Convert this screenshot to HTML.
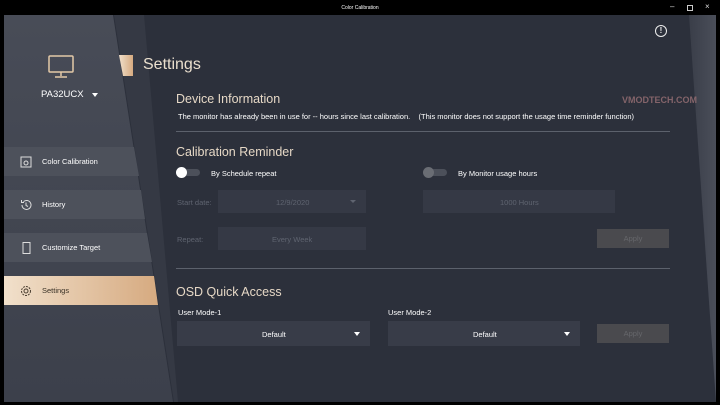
<!DOCTYPE html>
<html><head><style>
*{margin:0;padding:0;box-sizing:border-box}
body{width:720px;height:405px;background:#000;font-family:"Liberation Sans",sans-serif;position:relative;overflow:hidden}
.abs{position:absolute}
#win{position:absolute;left:4px;top:15px;width:712px;height:387px;background:#2c303b;overflow:hidden}
.t{position:absolute;white-space:nowrap}
.h{color:#e6d8c6;font-size:12.5px}
.s{color:#fff;font-size:7.5px}
.box{position:absolute;background:#353945}
.dim{color:#5f6470;font-size:7.5px}
.btn{position:absolute;background:#4a4a4e;color:#66676b;font-size:7.5px;text-align:center}
.item{position:absolute;left:0;width:150px;height:29px;color:#fff;font-size:7.5px}
.item span{position:absolute;left:38px;top:10px;white-space:nowrap}
.item svg{position:absolute;left:16px;top:9px}
</style></head><body>
<div class="t" style="left:0;width:720px;top:5px;text-align:center;color:#fff;font-size:5px">Color Calibration</div>
<div class="t" style="left:670px;top:2px;color:#ddd;font-size:8px">–</div>
<div class="abs" style="left:687px;top:5px;width:6px;height:6px;border:1px solid #ccc"></div>
<div class="t" style="left:705px;top:2px;color:#ddd;font-size:8px">×</div>
<div id="win">
 <svg class="abs" style="left:0;top:0" width="712" height="387">
  <defs><linearGradient id="sb" x1="0" y1="0" x2="0" y2="1"><stop offset="0" stop-color="#484c57"/><stop offset="1" stop-color="#3c404b"/></linearGradient>
  <linearGradient id="gd" x1="0" y1="0" x2="1" y2="0"><stop offset="0" stop-color="#f1e0cb"/><stop offset="1" stop-color="#d6aa80"/></linearGradient>
  <linearGradient id="rs" x1="0" y1="0" x2="1" y2="0"><stop offset="0" stop-color="#3a3e49"/><stop offset="1" stop-color="#4a4e59"/></linearGradient></defs>
  <polygon points="0,0 109,0 169,387 0,387" fill="url(#sb)"/>
  <polygon points="110,0 140,0 174,387 170,387" fill="#353944"/>
  <polygon points="685,0 712,0 712,387 712,387" fill="url(#rs)"/>
  <polygon points="0,132 130,132 135,161 0,161" fill="#4d515b"/>
  <polygon points="0,175 137,175 141,204 0,204" fill="#4d515b"/>
  <polygon points="0,218 143,218 148,247 0,247" fill="#4d515b"/>
  <polygon points="0,261 150,261 154,290 0,290" fill="url(#gd)"/>
  <polygon points="115,40 129,40 129,61 119,61" fill="url(#gd)"/>
 </svg>
 <svg class="abs" style="left:44px;top:40px" width="26" height="24" viewBox="0 0 26 24"><rect x="1" y="1" width="24" height="16" rx="1" fill="none" stroke="#e4c9a8" stroke-width="1.5"/><path d="M13 17v4M7 22h12" stroke="#e4c9a8" stroke-width="1.5"/></svg>
 <div class="t" style="left:37px;top:74px;color:#fff;font-size:9.5px">PA32UCX</div>
 <div class="abs" style="left:88px;top:78px;border-left:3.5px solid transparent;border-right:3.5px solid transparent;border-top:4px solid #fff"></div>
 <div class="item" style="top:132px"><svg width="12" height="12"><rect x="1" y="1" width="10" height="10" fill="none" stroke="#ddd"/><circle cx="6" cy="7" r="2" fill="none" stroke="#ddd"/></svg><span>Color Calibration</span></div>
 <div class="item" style="top:175px"><svg width="12" height="12"><path d="M2 6a4.5 4.5 0 1 0 1.5-3.4M1.5 1v2.5H4M6 3.5V6.5l2 1" fill="none" stroke="#ddd"/></svg><span>History</span></div>
 <div class="item" style="top:218px"><svg width="12" height="12"><rect x="3" y="0.5" width="7" height="11" fill="none" stroke="#ddd"/></svg><span>Customize Target</span></div>
 <div class="item" style="top:261px;color:#3a3226"><svg width="12" height="12"><circle cx="6" cy="6" r="4.5" fill="none" stroke="#4a3e30" stroke-dasharray="2 1"/><circle cx="6" cy="6" r="2" fill="none" stroke="#4a3e30"/></svg><span>Settings</span></div>
 <div class="t" style="left:139px;top:41px;color:#eadfce;font-size:16px">Settings</div>
 <div class="t h" style="left:172px;top:77px">Device Information</div>
 <div class="t s" style="left:174px;top:97px">The monitor has already been in use for -- hours since last calibration. &nbsp;&nbsp;&nbsp;(This monitor does not support the usage time reminder function)</div>
 <div class="abs" style="left:172px;top:116px;width:494px;height:1px;background:#5c616c"></div>
 <div class="t h" style="left:172px;top:130px">Calibration Reminder</div>
 <div class="abs" style="left:174px;top:154px;width:22px;height:7px;border-radius:4px;background:#4c505a"></div>
 <div class="abs" style="left:172px;top:152px;width:11px;height:11px;border-radius:50%;background:#fff"></div>
 <div class="t s" style="left:207px;top:154px">By Schedule repeat</div>
 <div class="abs" style="left:421px;top:154px;width:22px;height:7px;border-radius:4px;background:#4c505a"></div>
 <div class="abs" style="left:419px;top:152px;width:11px;height:11px;border-radius:50%;background:#6a6d74"></div>
 <div class="t s" style="left:454px;top:154px">By Monitor usage hours</div>
 <div class="t dim" style="left:173px;top:183px">Start date:</div>
 <div class="box" style="left:214px;top:175px;width:148px;height:23px"><div class="t dim" style="left:58px;top:8px">12/9/2020</div><div class="abs" style="left:132px;top:10px;border-left:3px solid transparent;border-right:3px solid transparent;border-top:3.5px solid #5f6470"></div></div>
 <div class="box" style="left:419px;top:175px;width:192px;height:23px"><div class="t dim" style="left:77px;top:8px">1000 Hours</div></div>
 <div class="t dim" style="left:173px;top:220px">Repeat:</div>
 <div class="box" style="left:214px;top:212px;width:148px;height:23px"><div class="t dim" style="left:54px;top:8px">Every Week</div></div>
 <div class="btn" style="left:593px;top:214px;width:72px;height:19px;line-height:19px">Apply</div>
 <div class="abs" style="left:172px;top:253px;width:494px;height:1px;background:#5c616c"></div>
 <div class="t h" style="left:172px;top:270px">OSD Quick Access</div>
 <div class="t s" style="left:174px;top:293px">User Mode-1</div>
 <div class="t s" style="left:384px;top:293px">User Mode-2</div>
 <div class="box" style="left:173px;top:306px;width:193px;height:25px;background:#383c48"><div class="t s" style="left:85px;top:9px">Default</div><div class="abs" style="left:177px;top:11px;border-left:3.5px solid transparent;border-right:3.5px solid transparent;border-top:4px solid #fff"></div></div>
 <div class="box" style="left:384px;top:306px;width:192px;height:25px;background:#383c48"><div class="t s" style="left:85px;top:9px">Default</div><div class="abs" style="left:176px;top:11px;border-left:3.5px solid transparent;border-right:3.5px solid transparent;border-top:4px solid #fff"></div></div>
 <div class="btn" style="left:593px;top:309px;width:72px;height:19px;line-height:19px">Apply</div>
 <div class="abs" style="left:651px;top:10px;width:12px;height:12px;border-radius:50%;border:1.5px solid #eee;color:#eee;font-size:8px;text-align:center;line-height:9px;font-weight:bold">!</div>
 <div class="t" style="left:618px;top:80px;color:#9a7176;font-size:9px;font-weight:bold;opacity:.8">VMODTECH.COM</div>
</div>
</body></html>
